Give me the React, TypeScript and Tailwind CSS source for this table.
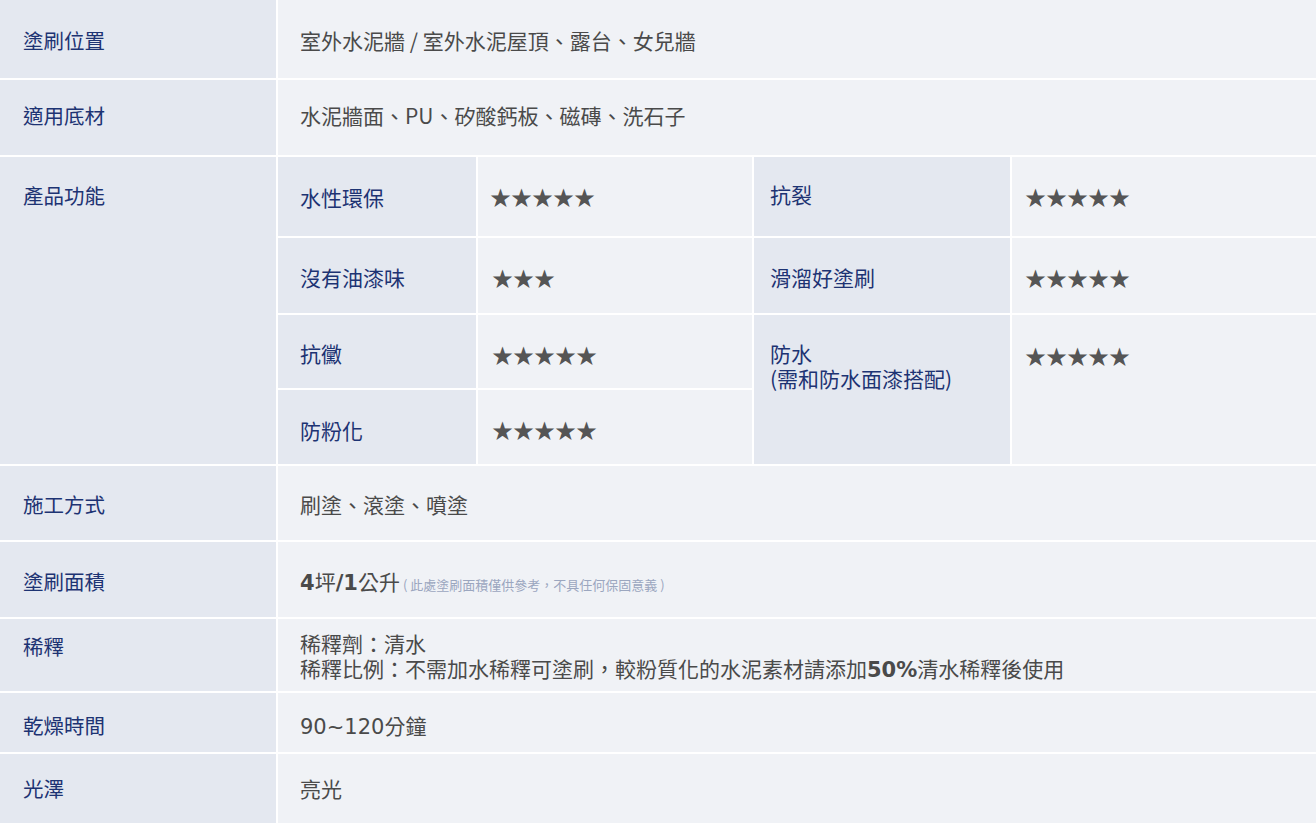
import React from "react";

const cjk = "font-['Noto_Sans_CJK_TC',_'Noto_Sans',_sans-serif]";
const num = "font-['DejaVu_Sans',_sans-serif]";

function Label({ children, pt }: { children: React.ReactNode; pt: string }) {
  return (
    <div className={`bg-[#e4e8f0] pl-[23px] ${pt} text-[20.5px] leading-[25px] text-[#1d3373]`}>
      {children}
    </div>
  );
}

function Value({ children, pt }: { children: React.ReactNode; pt: string }) {
  return (
    <div className={`bg-[#f0f2f6] pl-[22px] ${pt} text-[21px] leading-[25px] text-[#4a4a4a]`}>
      {children}
    </div>
  );
}

function Stars({ n, pl }: { n: number; pl: string }) {
  return (
    <div className={`bg-[#f0f2f6] ${pl} pt-[27px] text-[21px] leading-[25px] text-[#555555]`}>
      {"★".repeat(n)}
    </div>
  );
}

function SubLabel({ children, pl, pt }: { children: React.ReactNode; pl: string; pt: string }) {
  return (
    <div className={`bg-[#e4e8f0] ${pl} ${pt} text-[21px] leading-[25px] text-[#1d3373]`}>{children}</div>
  );
}

export default function App() {
  return (
    <div className={`w-[1316px] h-[823px] overflow-hidden bg-white ${cjk}`}>
      <div className="grid grid-cols-[276px_1fr] grid-rows-[78px_75px_307px_74px_75px_72px_59px_69px] gap-[2px] bg-white">
        <Label pt="pt-[28px]">塗刷位置</Label>
        <Value pt="pt-[28px]">室外水泥牆 / 室外水泥屋頂、露台、女兒牆</Value>

        <Label pt="pt-[23px]">適用底材</Label>
        <Value pt="pt-[23px]">水泥牆面、PU、矽酸鈣板、磁磚、洗石子</Value>

        <Label pt="pt-[26px]">產品功能</Label>
        <div className="grid grid-cols-[198px_274px_256px_1fr] grid-rows-[79px_75px_73px_74px] gap-[2px] bg-white">
          <SubLabel pl="pl-[22px]" pt="pt-[28px]">水性環保</SubLabel>
          <Stars n={5} pl="pl-[12px]" />
          <SubLabel pl="pl-[16px]" pt="pt-[25px]">抗裂</SubLabel>
          <Stars n={5} pl="pl-[13px]" />

          <SubLabel pl="pl-[22px]" pt="pt-[27px]">沒有油漆味</SubLabel>
          <Stars n={3} pl="pl-[14px]" />
          <SubLabel pl="pl-[16px]" pt="pt-[27px]">滑溜好塗刷</SubLabel>
          <Stars n={5} pl="pl-[13px]" />

          <SubLabel pl="pl-[22px]" pt="pt-[26px]">抗黴</SubLabel>
          <Stars n={5} pl="pl-[14px]" />
          <div className="row-span-2 bg-[#e4e8f0] pl-[16px] pt-[26px] text-[21px] leading-[25px] text-[#1d3373]">
            防水
            <br />
            (需和防水面漆搭配)
          </div>
          <div className="row-span-2 bg-[#f0f2f6] pl-[13px] pt-[28px] text-[21px] leading-[25px] text-[#555555]">
            ★★★★★
          </div>

          <SubLabel pl="pl-[22px]" pt="pt-[28px]">防粉化</SubLabel>
          <Stars n={5} pl="pl-[14px]" />
        </div>

        <Label pt="pt-[26px]">施工方式</Label>
        <Value pt="pt-[26px]">刷塗、滾塗、噴塗</Value>

        <Label pt="pt-[27px]">塗刷面積</Label>
        <Value pt="pt-[27px]">
          <span className={`${num} font-bold`}>4</span>坪<span className={`${num} font-bold`}>/1</span>公升
          <span className="ml-[3px] text-[13px] text-[#9ba6bf]">( 此處塗刷面積僅供參考，不具任何保固意義 )</span>
        </Value>

        <Label pt="pt-[15px]">稀釋</Label>
        <Value pt="pt-[12px]">
          稀釋劑：清水
          <br />
          稀釋比例：不需加水稀釋可塗刷，較粉質化的水泥素材請添加<span className={`${num} font-bold`}>50%</span>清水稀釋後使用
        </Value>

        <Label pt="pt-[20px]">乾燥時間</Label>
        <Value pt="pt-[20px]">
          <span className={num}>90~120</span>分鐘
        </Value>

        <Label pt="pt-[22px]">光澤</Label>
        <Value pt="pt-[22px]">亮光</Value>
      </div>
    </div>
  );
}
